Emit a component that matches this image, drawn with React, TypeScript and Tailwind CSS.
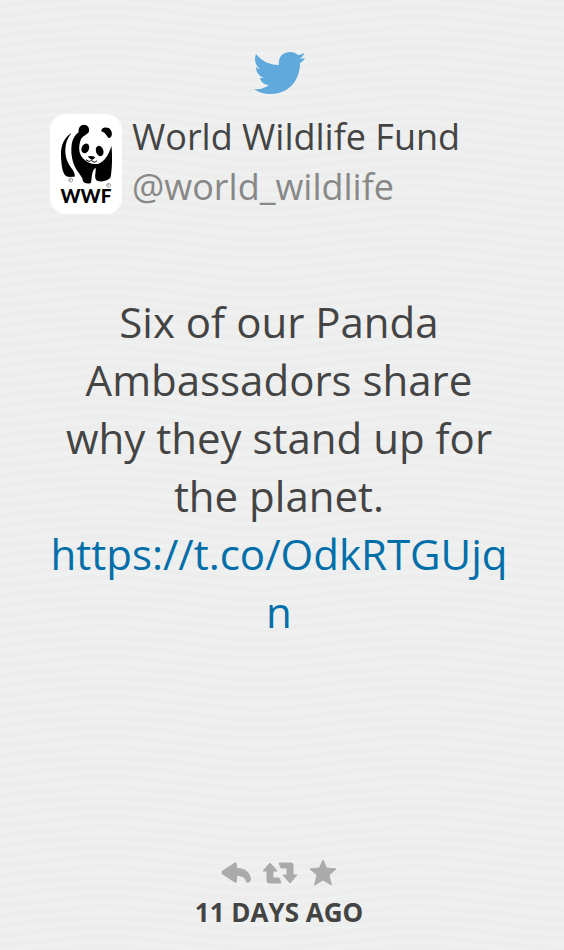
import React from "react";

function Waves() {
  return (
    <svg className="absolute inset-0 h-full w-full" aria-hidden="true">
      <defs>
        <pattern id="waves" width="312" height="10" patternUnits="userSpaceOnUse" x="-52" y="0">
          <path
            d="M0 -6 C52 -6 104 -18 156 -18 S260 -6 312 -6 M0 4 C52 4 104 -8 156 -8 S260 4 312 4 M0 14 C52 14 104 2 156 2 S260 14 312 14 M0 24 C52 24 104 12 156 12 S260 24 312 24"
            fill="none"
            stroke="#eff1f0"
            strokeWidth="4"
          />
        </pattern>
      </defs>
      <rect width="100%" height="100%" fill="url(#waves)" />
    </svg>
  );
}

function TwitterBird() {
  return (
    <svg viewBox="0 0 52 42" className="h-[42px] w-[52px]" fill="#5fa9dd" role="img" aria-label="Twitter">
      <path d="M3 2 C9 9 16 13 26 13 C25 5 30 0 37 0 C40 0 43 1 45 3 C47 3 49 2 51 1 C51 3 49 5 47 7 C49 7 50 6 52 6 C51 8 49 10 47 11 C47 30 34 42 18 42 C11 42 5 40 1 37 C7 38 12 36 16 33 C11 33 8 30 7 26 C9 26 10 26 11 26 C6 24 3 20 3 15 C4 16 6 17 7 17 C2 13 1 7 3 2 Z" />
    </svg>
  );
}

function PandaLogo() {
  return (
    <svg
      viewBox="0 0 72 100"
      className="h-[100px] w-[72px] shrink-0 rounded-[16px] bg-white"
      role="img"
      aria-label="WWF"
    >
      <g transform="translate(-10 -9) scale(.3333)">
        <path d="M95 84 C72 97 62 122 63 152 C64 180 67 205 79 214 C87 217 96 215 104 215 C106 209 102 203 99 196 C83 176 75 157 76 132 C77 112 84 96 95 84 Z" />
        <path d="M116 82 C114 68 122 59 132 59 C143 59 149 68 147 80 C142 89 127 92 122 105 C114 127 117 149 130 161 C143 174 160 180 176 176 C195 168 208 146 214 122 C218 150 216 192 212 217 C204 229 184 232 171 227 C161 218 168 206 167 188 C154 196 156 220 153 233 C146 238 134 236 129 229 C128 217 121 212 115 202 C99 180 91 150 95 119 C98 101 105 90 116 82 Z" />
        <path d="M184 79 C183 68 196 65 206 69 C216 75 219 89 212 97 C208 101 204 99 201 93 C196 85 191 81 184 79 Z" />
        <ellipse cx="136" cy="130" rx="11" ry="15" transform="rotate(25 136 130)" />
        <ellipse cx="179" cy="138" rx="11" ry="16" transform="rotate(-18 179 138)" />
        <path d="M144 154 Q155 151 166 157 Q160 165 155 164 Q147 162 144 154 Z" />
        <path d="M138 164 Q149 174 155 166 Q163 176 171 167" fill="none" stroke="#000" strokeWidth="3" />
        <g fill="none" stroke="#777" strokeWidth="2">
          <circle cx="92" cy="225" r="6" />
          <circle cx="206" cy="241" r="6" />
          <path d="M90 228 V222 H94 M204 244 V238 H208" />
        </g>
      </g>
      <text x="36" y="89" textAnchor="middle" className="font-['Lato',sans-serif] text-[19px] font-black">
        WWF
      </text>
    </svg>
  );
}

function ReplyIcon() {
  return (
    <svg viewBox="0 0 30 22" className="h-[22px] w-[30px]" fill="#aaa">
      <path d="M1 9 L13 1 Q16 -1 16 3 V6 C25 6 30 11 30 18 Q28 22 25 20 C25 16 21 14 16 14 V18 Q16 22 13 20 L1 12 Q0 10 1 9 Z" />
    </svg>
  );
}

function RetweetIcon() {
  return (
    <svg viewBox="0 0 36 22" className="h-[22px] w-[36px]" fill="#aaa" stroke="#aaa" strokeLinejoin="round">
      <path d="M8 1 L15 9 H11 V16 H17 L19 21 H7 Q5 21 5 19 V9 H1 Z" />
      <path d="M17 1 H29 Q31 1 31 3 V13 H35 L28 21 L21 13 H25 V6 H19 Z" />
    </svg>
  );
}

function StarIcon() {
  return (
    <svg viewBox="0 0 28 27" className="h-[27px] w-[28px]" fill="#aaa" stroke="#aaa" strokeLinejoin="round">
      <path d="M14 1 L17.500 9 L27 10 L20 16 L22.500 26 L14 21 L5.500 26 L8 16 L1 10 L10.500 9 Z" />
    </svg>
  );
}

export default function App() {
  return (
    <main className="relative min-h-screen bg-[#ecedec] font-['Open_Sans','Noto_Sans',sans-serif] text-[#444]">
      <Waves />
      <article className="relative flex min-h-screen flex-col pt-[52px] pr-14 pb-5 pl-[50px]">
        <a href="#twitter" className="self-center">
          <TwitterBird />
        </a>
        <header className="mt-5 flex gap-2.5">
          <PandaLogo />
          <div className="text-[36px] leading-[50px]">
            <h1 className="-mt-0.5">World Wildlife Fund</h1>
            <a href="#profile" className="block text-[#888]">@world_wildlife</a>
          </div>
        </header>
        <p className="mt-[79px] text-center text-[42px] leading-[58px] break-words">
          Six of our Panda Ambassadors share why they stand up for the planet.{" "}
          <a href="#story" className="text-[#006ea8]">https://t.co/OdkRTGUjqn</a>
        </p>
        <footer className="mt-auto flex flex-col items-center">
          <div className="flex items-center gap-[11px]">
            <button type="button" aria-label="Reply"><ReplyIcon /></button>
            <button type="button" aria-label="Retweet"><RetweetIcon /></button>
            <button type="button" aria-label="Favorite"><StarIcon /></button>
          </div>
          <time className="mt-2 text-[26px] leading-[36px] font-bold">11 DAYS AGO</time>
        </footer>
      </article>
    </main>
  );
}
